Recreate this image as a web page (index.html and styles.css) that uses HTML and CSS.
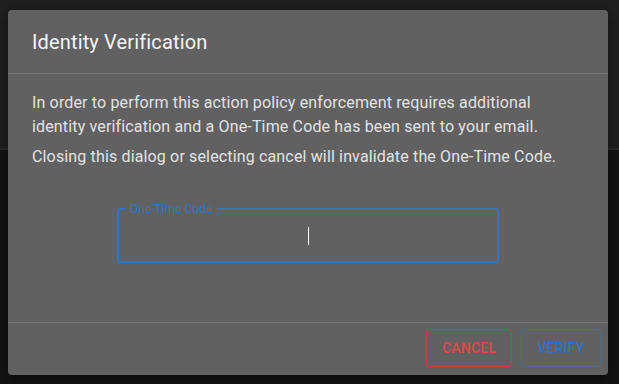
FILE: index.html
```html
<!DOCTYPE html>
<html lang="en">
<head>
    <meta charset="UTF-8">
    <title>Identity Verification</title>
    <link rel="stylesheet" href="styles.css">
</head>
<body>
    <div class="backdrop">
        <div class="backdrop-top"></div>
        <div class="backdrop-bottom"></div>
    </div>

    <div class="dialog">
        <div class="dialog-title">Identity Verification</div>
        <div class="dialog-content">
            <p>In order to perform this action policy enforcement requires additional identity verification and a One-Time Code has been sent to your email.</p>
            <p>Closing this dialog or selecting cancel will invalidate the One-Time Code.</p>
            <div class="otp-field">
                <label class="otp-label">One-Time Code</label>
                <span class="caret"></span>
            </div>
        </div>
        <div class="dialog-actions">
            <button class="btn btn-cancel">Cancel</button>
            <button class="btn btn-verify">Verify</button>
        </div>
    </div>
</body>
</html>
```

FILE: styles.css
```css
html, body {
    margin: 0;
    padding: 0;
    height: 100%;
}

body {
    font-family: Roboto, 'Liberation Sans', Arial, sans-serif;
    background: #141414;
    overflow: hidden;
}

.backdrop {
    display: flex;
    flex-direction: column;
    height: 100%;
}

.backdrop-top {
    height: 148px;
    background: #1f1f1f;
    border-bottom: 2px solid #2a2a2a;
}

.backdrop-bottom {
    flex: 1;
    background: #141414;
}

.dialog {
    position: absolute;
    top: 10px;
    left: 8px;
    width: 600px;
    height: 365px;
    background: #616161;
    border-radius: 4px;
    display: flex;
    flex-direction: column;
    box-shadow: 0 4px 16px rgba(0, 0, 0, 0.5);
}

.dialog-title {
    height: 64px;
    box-sizing: border-box;
    padding: 0 24px;
    display: flex;
    align-items: center;
    font-size: 20px;
    letter-spacing: 0.15px;
    color: #f5f5f5;
    border-bottom: 1px solid #777;
}

.dialog-content {
    flex: 1;
    padding: 17px 50px 0 24px;
    color: #e3e3e3;
    font-size: 16px;
    line-height: 24px;
    letter-spacing: 0.15px;
    border-bottom: 1px solid #777;
}

.dialog-content p {
    margin: 0 0 6px;
}

.otp-field {
    position: relative;
    width: 382px;
    height: 55px;
    box-sizing: border-box;
    margin: 39px 0 0 85px;
    border: 2px solid #2f74c4;
    border-radius: 3px;
    display: flex;
    align-items: center;
    justify-content: center;
}

.otp-label {
    position: absolute;
    top: -8px;
    left: 6px;
    padding: 0 5px;
    background: #616161;
    font-size: 12px;
    line-height: 14px;
    letter-spacing: 0;
    color: #2f74c4;
}

.caret {
    width: 1px;
    height: 18px;
    background: #fff;
    margin-left: 1px;
}

.dialog-actions {
    display: flex;
    justify-content: flex-end;
    gap: 9px;
    padding: 6px 7px 8px;
}

.btn {
    font-family: inherit;
    font-size: 14px;
    font-weight: 500;
    text-transform: uppercase;
    letter-spacing: 0.2px;
    height: 38px;
    background: transparent;
    border-radius: 3px;
    padding: 0 15px;
}

.btn-cancel {
    color: #e04848;
    border: 1px solid #b84444;
    width: 86px;
}

.btn-verify {
    color: #2c72c8;
    border: 1px solid #4f6b8a;
    width: 80px;
}
```
